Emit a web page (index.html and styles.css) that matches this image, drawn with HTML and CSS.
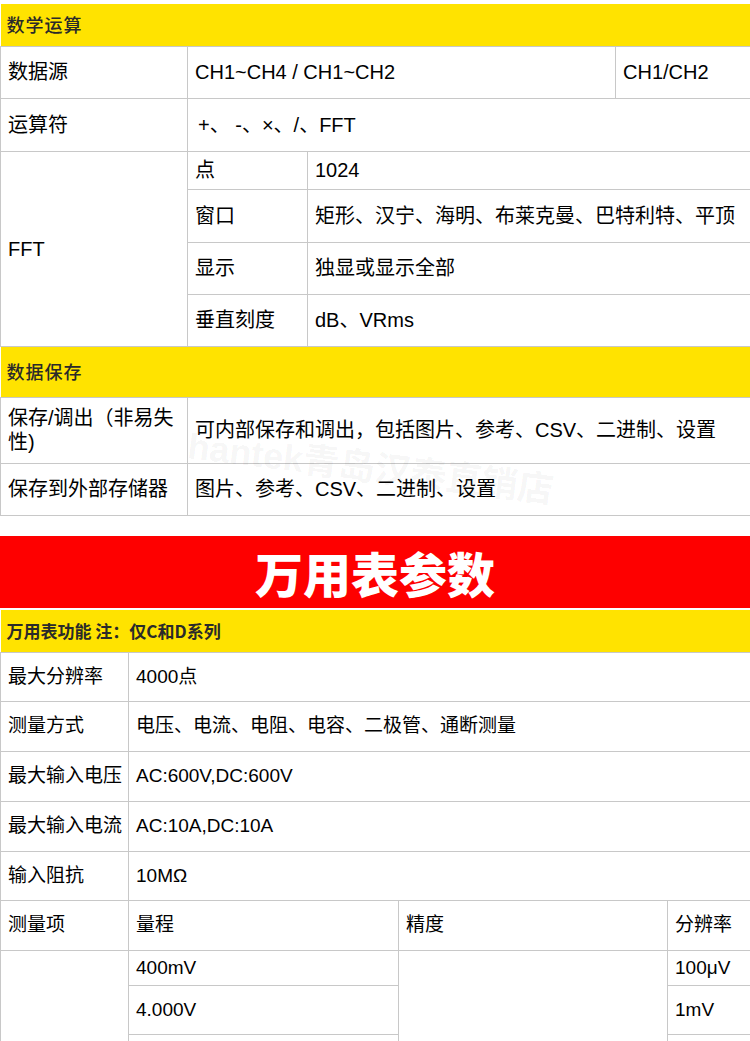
FILE: index.html
```html
<!DOCTYPE html>
<html lang="zh-CN">
<head>
<meta charset="utf-8">
<title>参数</title>
<link rel="stylesheet" href="styles.css">
</head>
<body>
<div class="sec sec-math">
  <table class="spec spec-a">
    <colgroup><col class="a1"><col class="a2"><col class="a3"><col class="a4"></colgroup>
    <tr class="head h41"><td colspan="4">数学运算</td></tr>
    <tr class="r52"><td>数据源</td><td colspan="2">CH1~CH4 / CH1~CH2</td><td>CH1/CH2</td></tr>
    <tr class="r53"><td>运算符</td><td colspan="3"><span class="op">+、 -、×、/、FFT</span></td></tr>
    <tr class="r38"><td rowspan="4">FFT</td><td>点</td><td colspan="2">1024</td></tr>
    <tr class="r53"><td>窗口</td><td colspan="2">矩形、汉宁、海明、布莱克曼、巴特利特、平顶</td></tr>
    <tr class="r52"><td>显示</td><td colspan="2">独显或显示全部</td></tr>
    <tr class="r52"><td>垂直刻度</td><td colspan="2">dB、VRms</td></tr>
    <tr class="head h50"><td colspan="4">数据保存</td></tr>
    <tr class="r66"><td class="wrap">保存/调出（非易失性)</td><td colspan="3">可内部保存和调出，包括图片、参考、CSV、二进制、设置</td></tr>
    <tr class="r52"><td>保存到外部存储器</td><td colspan="3">图片、参考、CSV、二进制、设置</td></tr>
  </table>
  <div class="watermark">hantek青岛汉泰直销店</div>
</div>

<div class="banner">万用表参数</div>

<div class="sec sec-dmm">
  <table class="spec spec-b">
    <colgroup><col class="b1"><col class="b2"><col class="b3"><col class="b4"></colgroup>
    <tr class="head h42"><td colspan="4">万用表功能 注：仅C和D系列</td></tr>
    <tr class="r49"><td>最大分辨率</td><td colspan="3">4000点</td></tr>
    <tr class="r50"><td>测量方式</td><td colspan="3">电压、电流、电阻、电容、二极管、通断测量</td></tr>
    <tr class="r50"><td>最大输入电压</td><td colspan="3">AC:600V,DC:600V</td></tr>
    <tr class="r50"><td>最大输入电流</td><td colspan="3">AC:10A,DC:10A</td></tr>
    <tr class="r49"><td>输入阻抗</td><td colspan="3">10MΩ</td></tr>
    <tr class="r50"><td>测量项</td><td>量程</td><td>精度</td><td>分辨率</td></tr>
    <tr class="r35"><td rowspan="3"></td><td>400mV</td><td rowspan="3"></td><td>100μV</td></tr>
    <tr class="r49"><td>4.000V</td><td>1mV</td></tr>
    <tr class="r20"><td></td><td></td></tr>
  </table>
</div>
</body>
</html>
```

FILE: styles.css
```css
html, body {
  margin: 0;
  padding: 0;
  background: #fff;
}

body {
  width: 750px;
  overflow: hidden;
  padding-top: 4px;
  font-family: "Liberation Sans", Arial, "Noto Sans CJK SC", sans-serif;
  color: #000;
}

.sec {
  position: relative;
}

.spec {
  width: 751px;
  border-collapse: collapse;
  table-layout: fixed;
}

.spec td {
  border: 1px solid #c8c8c8;
  padding: 0 7px;
  vertical-align: middle;
  line-height: 1.2;
  white-space: nowrap;
}

.spec td.wrap {
  white-space: normal;
}

.spec-a td { font-size: 20px; }
.spec-b td { font-size: 19px; }

.a1 { width: 187px; }
.a2 { width: 120px; }
.a3 { width: 308px; }
.a4 { width: 136px; }

.b1 { width: 128px; }
.b2 { width: 270px; }
.b3 { width: 269px; }
.b4 { width: 84px; }

.spec tr.head td {
  background: #ffe300;
  border-left: none;
  border-right: none;
  border-top: none;
  padding-left: 6px;
  font-family: "Noto Sans CJK SC", sans-serif;
  font-weight: 500;
  color: #2a2a2a;
}

.spec-a tr.head td {
  font-size: 18px;
  letter-spacing: 1px;
}

.spec-b tr.head td {
  font-size: 17px;
  font-weight: 700;
  letter-spacing: 0;
}

.h41 { height: 42px; }
.h42 { height: 43px; }
.h50 { height: 51px; }
.r20 { height: 20px; }
.r35 { height: 35px; }
.r38 { height: 38px; }
.r49 { height: 49px; }
.r50 { height: 50px; }
.r52 { height: 52px; }
.r53 { height: 53px; }
.r66 { height: 66px; }

.op {
  padding-left: 3px;
}

.watermark {
  position: absolute;
  left: 188px;
  top: 424px;
  font-family: "Liberation Sans", "Noto Sans CJK SC", sans-serif;
  font-size: 36px;
  font-weight: 700;
  line-height: 1;
  color: rgba(0, 0, 0, 0.05);
  transform: rotate(7deg);
  transform-origin: 0 50%;
  white-space: nowrap;
  pointer-events: none;
}

.banner {
  margin-top: 20px;
  margin-bottom: 2px;
  height: 72px;
  background: #fe0000;
  color: #fff;
  display: flex;
  align-items: center;
  justify-content: center;
  font-family: "Noto Sans CJK SC", sans-serif;
  font-weight: 900;
  font-size: 48px;
  letter-spacing: 0;
}
```
